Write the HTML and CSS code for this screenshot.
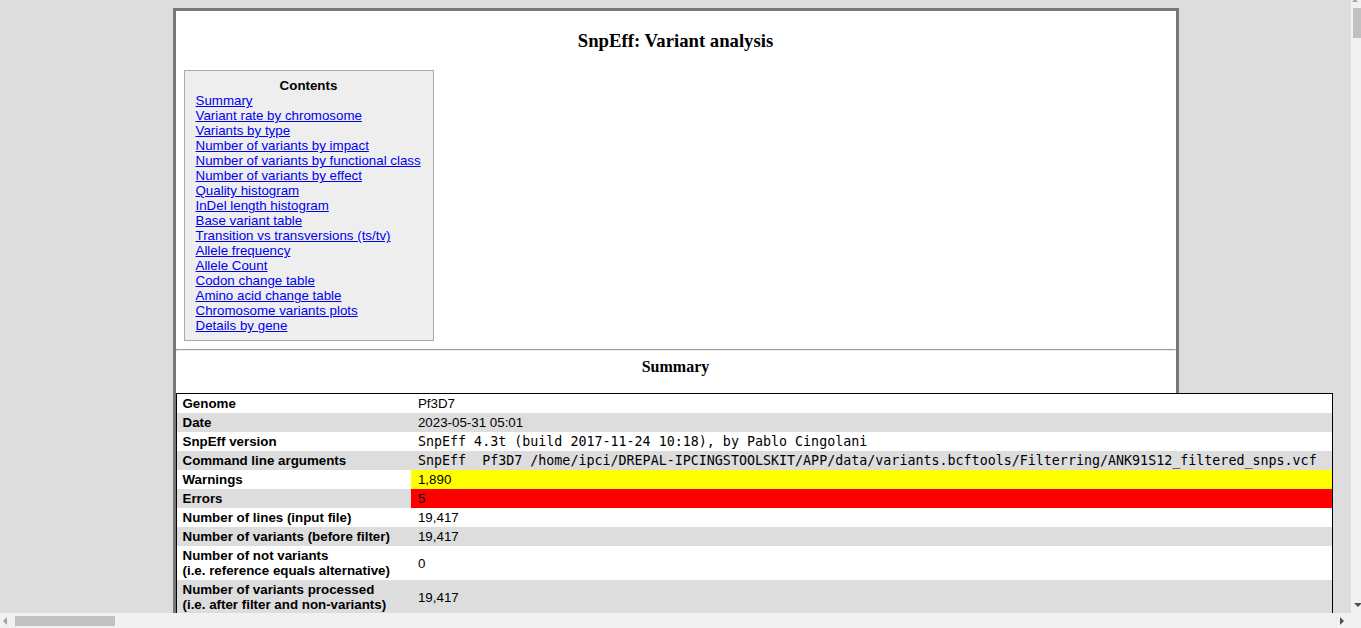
FILE: index.html
```html
<!DOCTYPE html>
<html>
<head>
<meta charset="utf-8">
<title>SnpEff: Variant analysis</title>
<link rel="stylesheet" href="styles.css">
</head>
<body>
<div class="page">
  <h3 class="title">SnpEff: Variant analysis</h3>
  <div class="toc">
    <div class="toc-title">Contents</div>
    <a href="#summary">Summary</a>
    <a href="#chrRate">Variant rate by chromosome</a>
    <a href="#changeTypeTable">Variants by type</a>
    <a href="#effectsImpact">Number of variants by impact</a>
    <a href="#effectsFuncClass">Number of variants by functional class</a>
    <a href="#effects">Number of variants by effect</a>
    <a href="#quality">Quality histogram</a>
    <a href="#indels">InDel length histogram</a>
    <a href="#baseChanges">Base variant table</a>
    <a href="#tstv">Transition vs transversions (ts/tv)</a>
    <a href="#alleleFreq">Allele frequency</a>
    <a href="#alleleCount">Allele Count</a>
    <a href="#codonChanges">Codon change table</a>
    <a href="#aaChanges">Amino acid change table</a>
    <a href="#chrPlots">Chromosome variants plots</a>
    <a href="snpEff_genes.txt">Details by gene</a>
  </div>
  <hr class="sep">
  <div class="section-title" id="summary">Summary</div>
  <table class="summary">
    <tr><th>Genome</th><td>Pf3D7</td></tr>
    <tr class="alt"><th>Date</th><td>2023-05-31 05:01</td></tr>
    <tr><th>SnpEff version</th><td class="mono">SnpEff 4.3t (build 2017-11-24 10:18), by Pablo Cingolani</td></tr>
    <tr class="alt"><th>Command line arguments</th><td class="mono">SnpEff&nbsp; Pf3D7 /home/ipci/DREPAL-IPCINGSTOOLSKIT/APP/data/variants.bcftools/Filterring/ANK91S12_filtered_snps.vcf</td></tr>
    <tr><th>Warnings</th><td class="warn">1,890</td></tr>
    <tr class="alt"><th>Errors</th><td class="err">5</td></tr>
    <tr><th>Number of lines (input file)</th><td>19,417</td></tr>
    <tr class="alt"><th>Number of variants (before filter)</th><td>19,417</td></tr>
    <tr><th>Number of not variants<br>(i.e. reference equals alternative)</th><td>0</td></tr>
    <tr class="alt"><th>Number of variants processed<br>(i.e. after filter and non-variants)</th><td>19,417</td></tr>
    <tr><th>Number of known variants<br>(i.e. non-empty ID)</th><td>0 ( 0% )</td></tr>
    <tr class="alt"><th>Number of multi-allelic VCF entries<br>(i.e. more than two alleles)</th><td>0</td></tr>
    <tr><th>Number of effects</th><td>38,121</td></tr>
    <tr class="alt"><th>Genome total length</th><td>23,332,839</td></tr>
    <tr><th>Genome effective length</th><td>23,332,839</td></tr>
    <tr class="alt"><th>Variant rate</th><td>1 variant every 1,201 bases</td></tr>
  </table>
</div>

<div class="vscroll" aria-hidden="true">
  <svg class="arrow-up" width="10" height="4" viewBox="0 0 10 4"><path d="M4 0 L7 3 L1 3 Z" fill="#a3a3a3"/></svg>
  <div class="vthumb"></div>
  <svg class="arrow-down" width="10" height="6" viewBox="0 0 10 6"><path d="M3 1 L11 1 L7 5 Z" fill="#505050"/></svg>
</div>
<div class="hscroll" aria-hidden="true">
  <svg class="arrow-left" width="6" height="10" viewBox="0 0 6 10"><path d="M5 1 L5 9 L1 5 Z" fill="#a3a3a3"/></svg>
  <div class="hthumb"></div>
  <svg class="arrow-right" width="6" height="10" viewBox="0 0 6 10"><path d="M1 1 L1 9 L5 5 Z" fill="#505050"/></svg>
</div>
<div class="scorner" aria-hidden="true"></div>
</body>
</html>
```

FILE: styles.css
```css
html {
  background: #dddddd;
  padding-right: 10px;
}

body {
  margin: 8px;
  font-family: "Liberation Sans", Arial, sans-serif;
}

.page {
  width: 1000px;
  margin: 0 auto;
  background: #ffffff;
  border: 3px solid #777777;
}

.title {
  font-family: "Liberation Serif", "Times New Roman", serif;
  font-size: 18.72px;
  font-weight: bold;
  text-align: center;
  margin: 18.72px 0;
}

.toc {
  margin-left: 8px;
  width: 250px;
  box-sizing: border-box;
  background: #eeeeee;
  border: 1px solid #aaaaaa;
  padding: 7px 11px 7px 11px;
  font-size: 13.33px;
  line-height: 15px;
}

.toc-title {
  text-align: center;
  font-weight: bold;
}

.toc a {
  display: block;
  width: fit-content;
  white-space: nowrap;
  color: #0000ee;
}

.sep {
  margin: 8px 0 7px;
}

.section-title {
  font-family: "Liberation Serif", "Times New Roman", serif;
  font-size: 16px;
  font-weight: bold;
  text-align: center;
  line-height: 18px;
  padding: 0 0 17px;
}

.summary {
  border: 1px solid #000000;
  border-collapse: separate;
  border-spacing: 0;
  background: #ffffff;
  font-size: 13.33px;
  line-height: 15px;
}

.summary th,
.summary td {
  padding: 2px 6px;
  text-align: left;
  vertical-align: middle;
  white-space: nowrap;
}

.summary th {
  width: 222px;
  padding-right: 7px;
  font-weight: bold;
}

.summary td {
  padding-left: 7px;
  padding-right: 15px;
}

.summary .alt {
  background: #dddddd;
}

.summary .mono {
  font-family: "DejaVu Sans Mono", monospace;
  font-size: 13.33px;
}

.summary .warn {
  background: #ffff00;
}

.summary .err {
  background: #ff0000;
}

/* browser scrollbars as seen in the capture */
.vscroll {
  position: fixed;
  top: 0;
  right: 0;
  bottom: 15px;
  width: 10px;
  background: #f1f1f1;
  z-index: 10;
}

.arrow-up {
  position: absolute;
  top: -1px;
  left: 0;
}

.vthumb {
  position: absolute;
  top: 8px;
  left: 2px;
  width: 8px;
  height: 30px;
  background: #c1c1c1;
}

.arrow-down {
  position: absolute;
  bottom: 5px;
  left: 0;
}

.hscroll {
  position: fixed;
  left: 0;
  right: 10px;
  bottom: 0;
  height: 15px;
  background: #f1f1f1;
  z-index: 10;
}

.arrow-left {
  position: absolute;
  left: 2px;
  top: 3px;
}

.hthumb {
  position: absolute;
  left: 15px;
  top: 3px;
  width: 100px;
  height: 10px;
  background: #c1c1c1;
}

.arrow-right {
  position: absolute;
  right: 6px;
  top: 3px;
}

.scorner {
  position: fixed;
  right: 0;
  bottom: 0;
  width: 10px;
  height: 15px;
  background: #f1f1f1;
  z-index: 10;
}
```
